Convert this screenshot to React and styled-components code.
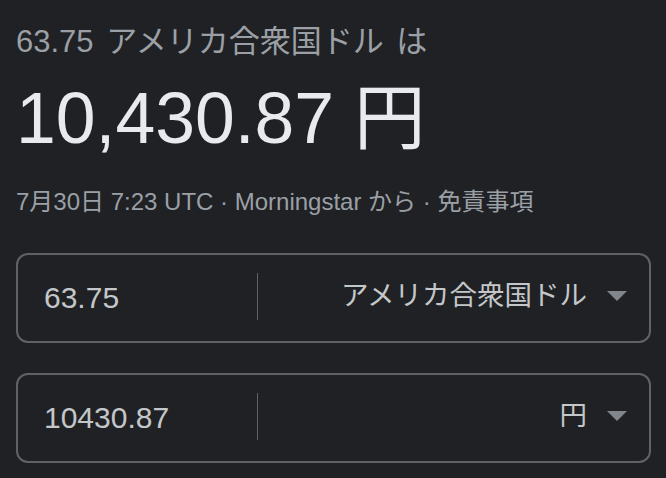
import styled, { createGlobalStyle } from "styled-components";

const GlobalStyle = createGlobalStyle`
  body {
    margin: 0;
    background: #202124;
    font-family: "Liberation Sans", Arial, "Noto Sans CJK JP", sans-serif;
  }
`;

const App = () => {
  return (
    <Page>
      <GlobalStyle />
      <Heading>63.75 アメリカ合衆国ドル は</Heading>
      <Result>10,430.87 円</Result>
      <Source>7月30日 7:23 UTC · Morningstar から · 免責事項</Source>
      <Converter>
        <AmountRow value="63.75" currency="アメリカ合衆国ドル" />
        <AmountRow value="10430.87" currency="円" />
      </Converter>
    </Page>
  );
};

const AmountRow = ({ value, currency }) => (
  <Box>
    <AmountField>
      <AmountInput type="text" value={value} readOnly />
    </AmountField>
    <Divider />
    <CurrencySelect>
      <span>{currency}</span>
      <Caret />
    </CurrencySelect>
  </Box>
);

export default App;

const Page = styled.div`
  padding: 24px 15px 0 16px;
  min-height: 100vh;
  box-sizing: border-box;
`;

const Heading = styled.div`
  color: #9aa0a6;
  font-size: 31px;
  line-height: 36px;
  word-spacing: 4px;
`;

const Result = styled.div`
  color: #e8eaed;
  font-size: 71.5px;
  line-height: 80px;
  margin-top: 18px;
`;

const Source = styled.div`
  color: #9aa0a6;
  font-size: 24px;
  line-height: 30px;
  margin-top: 29px;
`;

const Converter = styled.div`
  display: flex;
  flex-direction: column;
  gap: 30px;
  margin-top: 36px;
`;

const Box = styled.div`
  display: flex;
  align-items: center;
  height: 90px;
  border: 2px solid #5f6368;
  border-radius: 12px;
  box-sizing: border-box;
`;

const AmountField = styled.div`
  width: 239px;
  padding-left: 26px;
  box-sizing: border-box;
`;

const AmountInput = styled.input`
  width: 100%;
  border: none;
  outline: none;
  background: transparent;
  padding: 0;
  color: #c4c7c9;
  font-family: "Liberation Sans", Arial, sans-serif;
  font-size: 30px;
  line-height: 36px;
`;

const Divider = styled.div`
  width: 1px;
  height: 47px;
  margin-top: -4px;
  background: #5f6368;
`;

const CurrencySelect = styled.div`
  flex: 1;
  display: flex;
  align-items: center;
  justify-content: flex-end;
  gap: 20px;
  padding-right: 22px;
  color: #c4c7c9;
  font-size: 27.5px;
  line-height: 36px;
  margin-top: -4px;
`;

const Caret = styled.span`
  width: 0;
  height: 0;
  border-left: 10px solid transparent;
  border-right: 10px solid transparent;
  border-top: 10px solid #80868b;
`;
